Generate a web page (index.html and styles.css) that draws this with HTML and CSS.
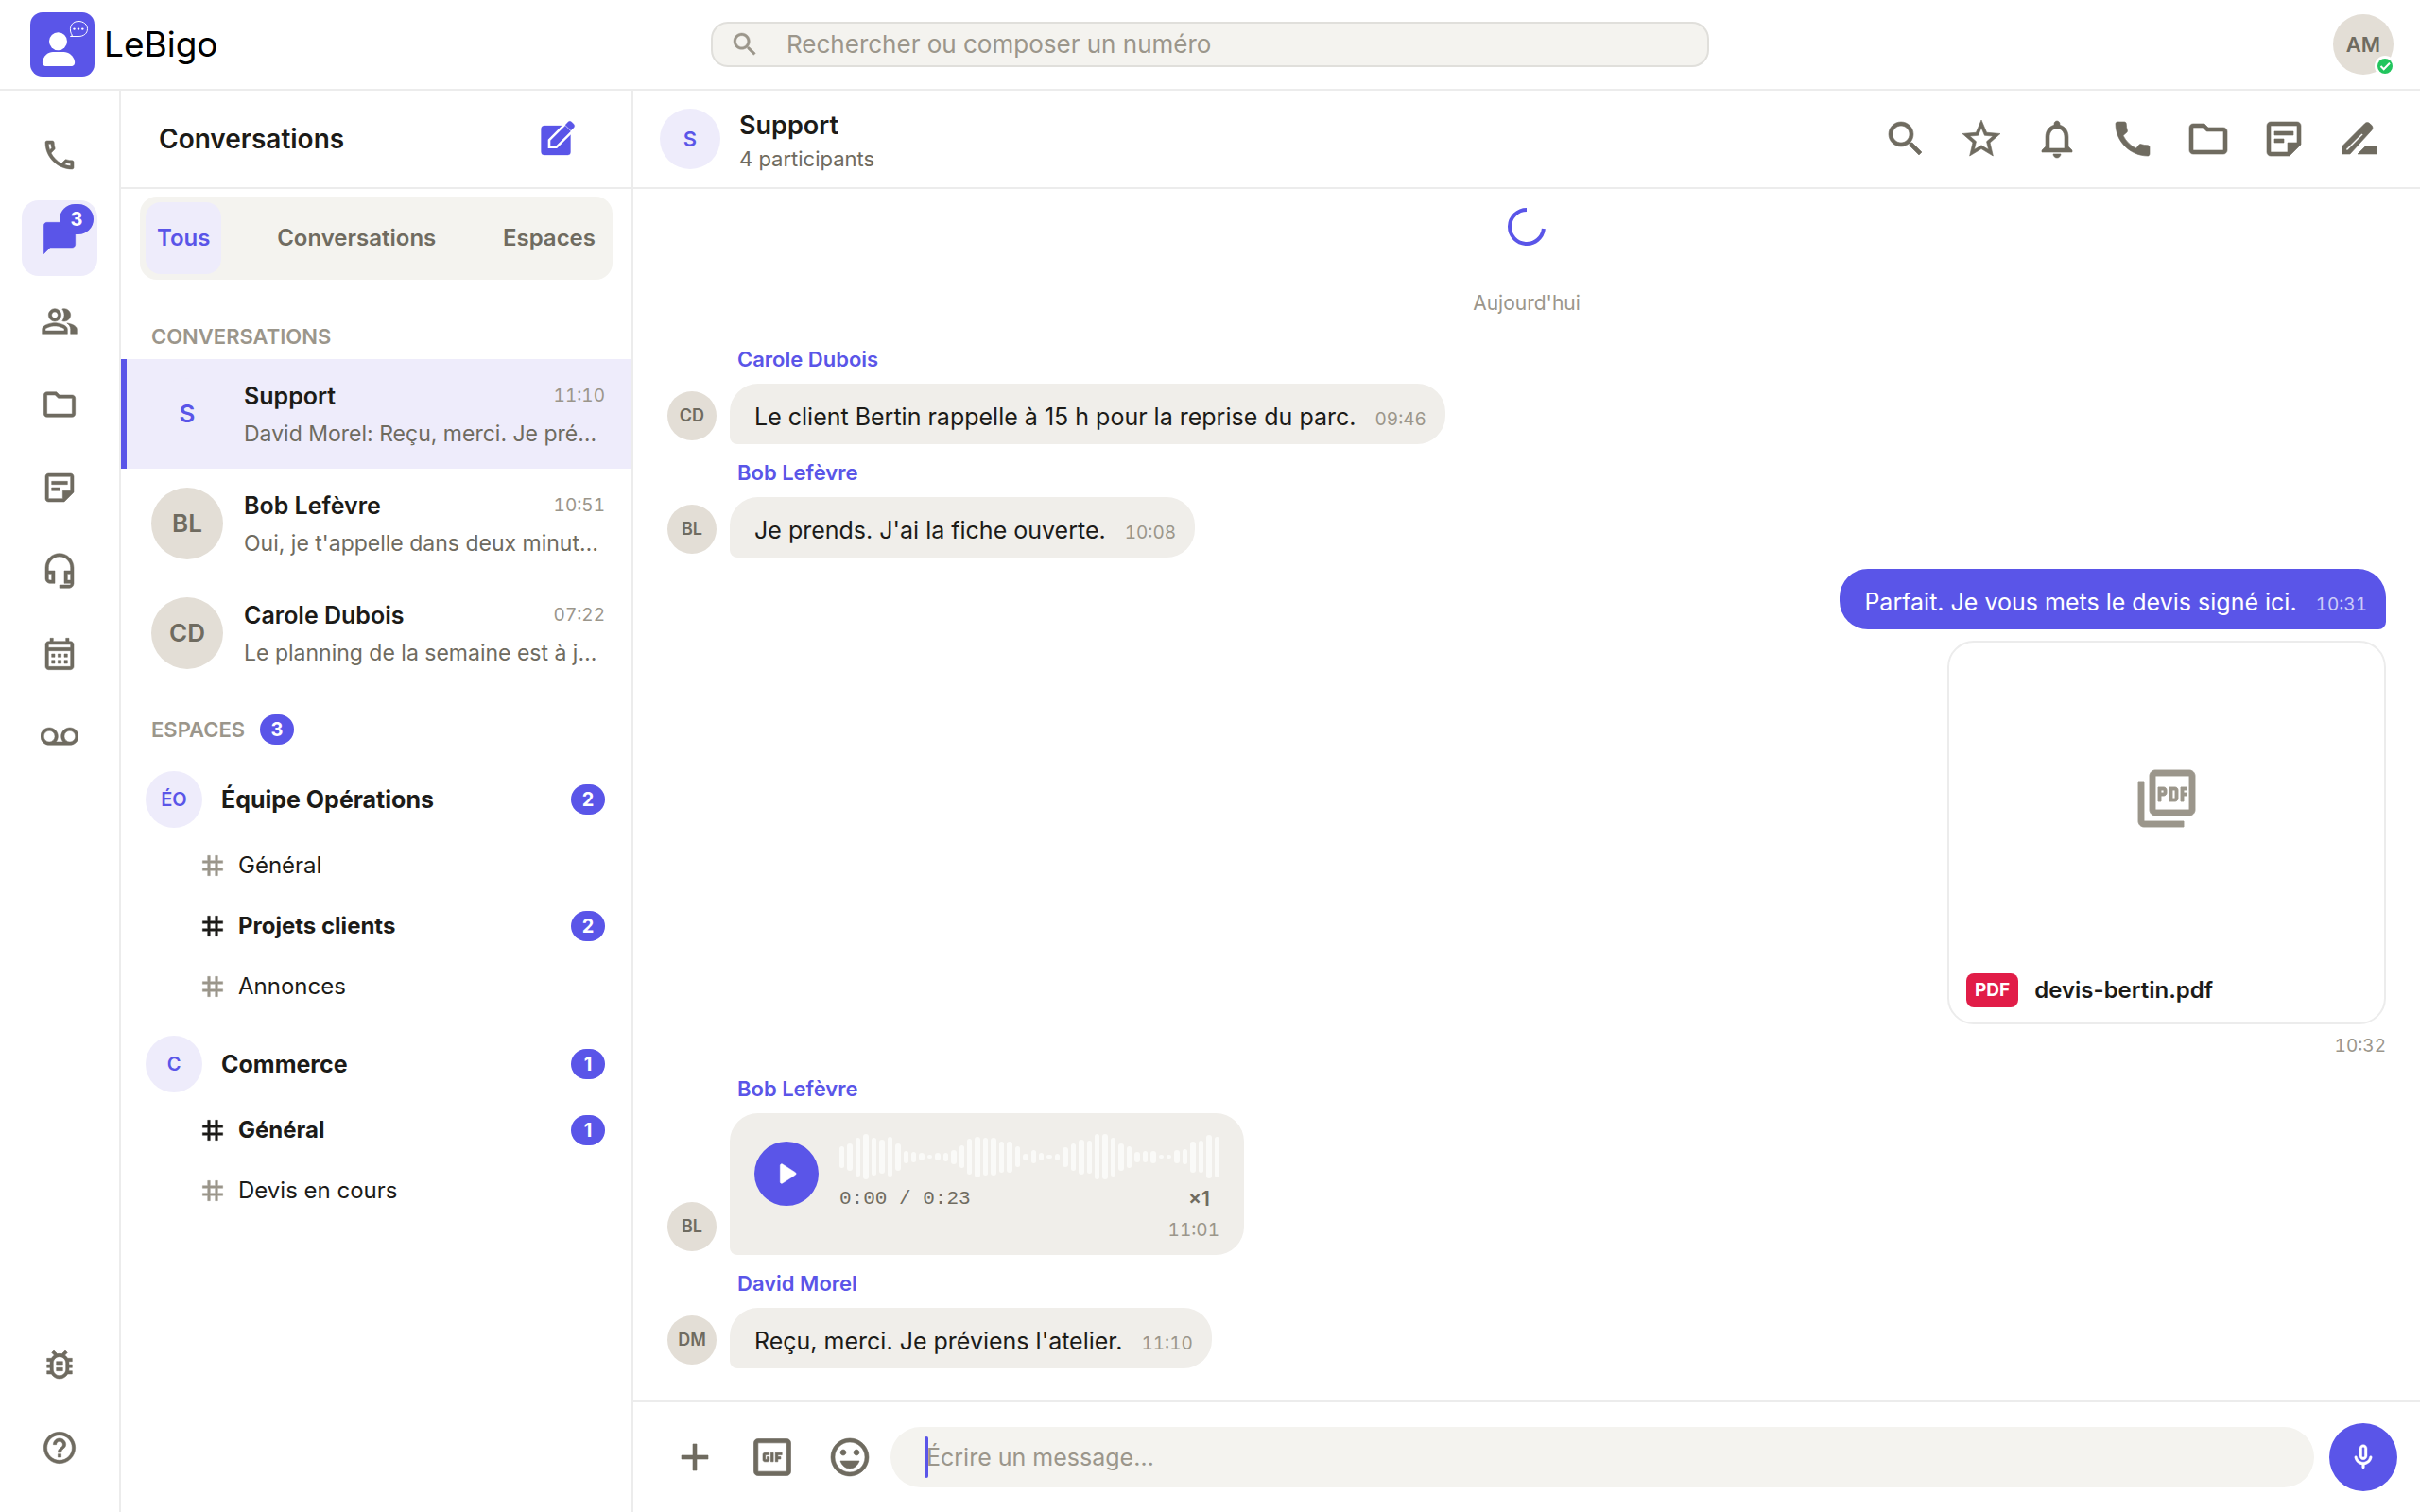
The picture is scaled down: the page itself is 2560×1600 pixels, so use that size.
FILE: index.html
```html
<!DOCTYPE html>
<html lang="fr">
<head>
<meta charset="utf-8">
<meta name="viewport" content="width=device-width, initial-scale=1">
<title>LeBigo</title>
<link rel="stylesheet" href="styles.css">
</head>
<body>
<svg class="sprite" aria-hidden="true">
  <symbol id="i-search" viewBox="0 0 24 24"><path d="M15.500 14h-.79l-.28-.27C15.410 12.590 16 11.110 16 9.500 16 5.910 13.090 3 9.500 3S3 5.910 3 9.500 5.910 16 9.500 16c1.610 0 3.090-.59 4.230-1.570l.27.28v.79l5 4.990L20.490 19l-4.990-5zm-6 0C7.010 14 5 11.990 5 9.500S7.010 5 9.500 5 14 7.010 14 9.500 11.990 14 9.500 14z"/></symbol>
  <symbol id="i-call-o" viewBox="0 0 24 24"><path d="M6.540 5c.06.89.21 1.760.45 2.590l-1.200 1.200c-.41-1.200-.67-2.470-.76-3.790h1.510m9.860 12.020c.85.24 1.720.39 2.600.45v1.490c-1.320-.09-2.590-.35-3.800-.75l1.200-1.190M7.500 3H4c-.55 0-1 .45-1 1 0 9.390 7.610 17 17 17 .55 0 1-.45 1-1v-3.490c0-.55-.45-1-1-1-1.240 0-2.450-.2-3.570-.57-.1-.04-.21-.05-.31-.05-.26 0-.51.1-.71.29l-2.200 2.200c-2.830-1.450-5.150-3.760-6.590-6.590l2.200-2.200c.28-.28.36-.67.25-1.020C8.700 6.450 8.500 5.250 8.500 4c0-.55-.45-1-1-1z"/></symbol>
  <symbol id="i-call" viewBox="0 0 24 24"><path d="M20.010 15.380c-1.230 0-2.420-.2-3.530-.56-.35-.12-.74-.03-1.010.24l-1.570 1.970c-2.830-1.350-5.480-3.900-6.890-6.830l1.950-1.660c.27-.28.35-.67.24-1.020-.37-1.110-.56-2.300-.56-3.530 0-.54-.45-.99-.99-.99H4.190C3.650 3 3 3.240 3 3.990 3 13.280 10.730 21 20.010 21c.71 0 .99-.63.99-1.180v-3.450c0-.54-.45-.99-.99-.99z"/></symbol>
  <symbol id="i-chat" viewBox="0 0 24 24"><path d="M20 2H4c-1.100 0-2 .9-2 2v18l4-4h14c1.100 0 2-.9 2-2V4c0-1.100-.9-2-2-2z"/></symbol>
  <symbol id="i-people" viewBox="0 0 24 24"><path d="M16.670 13.130C18.040 14.060 19 15.320 19 17v3h4v-3c0-2.180-3.570-3.470-6.330-3.870zM15 12c2.210 0 4-1.790 4-4s-1.790-4-4-4c-.47 0-.91.1-1.330.24C14.500 5.270 15 6.580 15 8s-.5 2.730-1.330 3.760c.42.14.86.24 1.330.24zM9 12c2.210 0 4-1.790 4-4s-1.790-4-4-4-4 1.790-4 4 1.790 4 4 4zm0-6c1.100 0 2 .9 2 2s-.9 2-2 2-2-.9-2-2 .9-2 2-2zM9 13c-2.670 0-8 1.340-8 4v3h16v-3c0-2.660-5.330-4-8-4zm6 5H3v-.99C3.200 16.290 6.300 15 9 15s5.800 1.290 6 2v1z"/></symbol>
  <symbol id="i-folder" viewBox="0 0 24 24"><path d="M9.170 6l2 2H20v10H4V6h5.170M10 4H4c-1.100 0-1.990.9-1.990 2L2 18c0 1.100.9 2 2 2h16c1.100 0 2-.9 2-2V8c0-1.100-.9-2-2-2h-8l-2-2z"/></symbol>
  <symbol id="i-note" viewBox="0 0 24 24"><path d="M19 5v9h-5v5H5V5h14m0-2H5c-1.100 0-2 .9-2 2v14c0 1.100.9 2 2 2h10l6-6V5c0-1.100-.9-2-2-2zm-7 11H7v-2h5v2zm5-4H7V8h10v2z"/></symbol>
  <symbol id="i-agent" viewBox="0 0 24 24"><path d="M19 14v4h-2v-4h2M7 14v4H6c-.55 0-1-.45-1-1v-3h2m5-13c-4.970 0-9 4.030-9 9v7c0 1.660 1.340 3 3 3h3v-8H5v-2c0-3.870 3.130-7 7-7s7 3.130 7 7v2h-4v8h4v1h-7v2h6c1.660 0 3-1.340 3-3V10c0-4.970-4.030-9-9-9z"/></symbol>
  <symbol id="i-calendar" viewBox="0 0 24 24"><path d="M19 4h-1V2h-2v2H8V2H6v2H5c-1.110 0-1.990.9-1.990 2L3 20c0 1.100.89 2 2 2h14c1.100 0 2-.9 2-2V6c0-1.100-.9-2-2-2zm0 16H5V10h14v10zm0-12H5V6h14v2zM9 14H7v-2h2v2zm4 0h-2v-2h2v2zm4 0h-2v-2h2v2zm-8 4H7v-2h2v2zm4 0h-2v-2h2v2zm4 0h-2v-2h2v2z"/></symbol>
  <symbol id="i-voicemail" viewBox="0 0 24 24"><path d="M18.500 6C15.460 6 13 8.460 13 11.500c0 1.330.47 2.550 1.260 3.500H9.740c.79-.95 1.260-2.170 1.260-3.500C11 8.460 8.540 6 5.500 6S0 8.460 0 11.500 2.460 17 5.500 17h13c3.040 0 5.500-2.460 5.500-5.500S21.540 6 18.500 6zm-13 9C3.570 15 2 13.430 2 11.500S3.570 8 5.500 8 9 9.570 9 11.500 7.430 15 5.500 15zm13 0c-1.930 0-3.500-1.570-3.500-3.500S16.570 8 18.500 8 22 9.570 22 11.500 20.430 15 18.500 15z"/></symbol>
  <symbol id="i-bug" viewBox="0 0 24 24"><path d="M20 8h-2.810c-.45-.78-1.070-1.450-1.820-1.960L17 4.410 15.590 3l-2.170 2.170C12.960 5.060 12.490 5 12 5s-.96.06-1.410.17L8.410 3 7 4.410l1.620 1.630C7.880 6.550 7.260 7.220 6.810 8H4v2h2.090c-.05.33-.09.66-.09 1v1H4v2h2v1c0 .34.04.67.09 1H4v2h2.810c1.040 1.790 2.970 3 5.190 3s4.150-1.210 5.190-3H20v-2h-2.090c.05-.33.09-.66.09-1v-1h2v-2h-2v-1c0-.34-.04-.67-.09-1H20V8zm-4 7c0 2.210-1.790 4-4 4s-4-1.790-4-4v-4c0-2.210 1.790-4 4-4s4 1.790 4 4v4zm-6-1h4v2h-4v-2zm0-4h4v2h-4v-2z"/></symbol>
  <symbol id="i-help" viewBox="0 0 24 24"><path d="M11 18h2v-2h-2v2zm1-16C6.480 2 2 6.480 2 12s4.480 10 10 10 10-4.480 10-10S17.520 2 12 2zm0 18c-4.410 0-8-3.590-8-8s3.590-8 8-8 8 3.590 8 8-3.590 8-8 8zm0-14c-2.210 0-4 1.790-4 4h2c0-1.100.9-2 2-2s2 .9 2 2c0 2-3 1.750-3 5h2c0-2.250 3-2.500 3-5 0-2.210-1.790-4-4-4z"/></symbol>
  <symbol id="i-star" viewBox="0 0 24 24"><path d="M22 9.240l-7.190-.62L12 2 9.190 8.630 2 9.240l5.460 4.730L5.820 21 12 17.270 18.180 21l-1.630-7.030L22 9.240zM12 15.400l-3.760 2.270 1-4.280-3.320-2.880 4.380-.38L12 6.100l1.710 4.040 4.380.38-3.320 2.880 1 4.280L12 15.400z"/></symbol>
  <symbol id="i-bell" viewBox="0 0 24 24"><path d="M12 22c1.100 0 2-.9 2-2h-4c0 1.100.89 2 2 2zm6-6v-5c0-3.070-1.640-5.640-4.500-6.320V4c0-.83-.67-1.500-1.500-1.500s-1.500.67-1.500 1.500v.68C7.630 5.360 6 7.920 6 11v5l-2 2v1h16v-1l-2-2zm-2 1H8v-6c0-2.480 1.510-4.500 4-4.500s4 2.020 4 4.500v6z"/></symbol>
  <symbol id="i-sign" viewBox="0 0 24 24"><path fill-rule="evenodd" d="M3 20v-4.300L14.800 3.900c.8-.8 1.900-.8 2.700 0l.9.9c.8.8.8 1.900 0 2.700L7 20zM5 17.300l8.200-8.200.7.700L5.700 18H5z"/><path d="M11 20l4-4h6v4z"/></symbol>
  <symbol id="i-tag" viewBox="0 0 24 24"><path d="M20 10V8h-4V4h-2v4h-4V4H8v4H4v2h4v4H4v2h4v4h2v-4h4v4h2v-4h4v-2h-4v-4h4zm-6 4h-4v-4h4v4z"/></symbol>
  <symbol id="i-compose" viewBox="0 0 40 40"><path d="M6 6h24.500a3 3 0 0 1 3 3v25a3 3 0 0 1-3 3H6a3.500 3.500 0 0 1-3.500-3.500v-24A3.500 3.500 0 0 1 6 6z"/><path d="M11 28.800v-7.600L28 4.200l7.600 7.600-17 17z" stroke="#fff" stroke-width="2.600"/><path d="M28 5.300l2.800-3.100c1.200-1.200 2.800-1.200 4 0l2 2c1.200 1.200 1.200 2.800 0 4L34 11z"/></symbol>
  <symbol id="i-pdf" viewBox="0 0 24 24"><path d="M20 2H8c-1.100 0-2 .9-2 2v12c0 1.100.9 2 2 2h12c1.100 0 2-.9 2-2V4c0-1.100-.9-2-2-2zm0 14H8V4h12v12zM4 6H2v14c0 1.100.9 2 2 2h14v-2H4V6zm12 6V9c0-.55-.45-1-1-1h-2v5h2c.55 0 1-.45 1-1zm-2-3h1v3h-1V9zm4 2h1v-1h-1V9h1V8h-2v5h1zm-8 0h1c.55 0 1-.45 1-1V9c0-.55-.45-1-1-1H9v5h1v-2zm0-2h1v1h-1V9z"/></symbol>
  <symbol id="i-add" viewBox="0 0 24 24"><path d="M19 13h-6v6h-2v-6H5v-2h6V5h2v6h6v2z"/></symbol>
  <symbol id="i-gif" viewBox="0 0 24 24"><path d="M19 3H5c-1.100 0-2 .9-2 2v14c0 1.100.9 2 2 2h14c1.100 0 2-.9 2-2V5c0-1.100-.9-2-2-2zm0 16H5V5h14v14zM11.300 9.800h1.200v4.400h-1.200zM13.500 9.800h3.200v1.100h-2v.9h1.400v1.100h-1.400v1.300h-1.200zM8.300 9.800h2.200v1.100H8.600v2.200h.8v-1.300h1.100v1.600c0 .5-.3.800-.8.800H8.300c-.5 0-.9-.4-.9-.9v-2.600c0-.5.4-.9.900-.9z"/></symbol>
  <symbol id="i-smile" viewBox="0 0 24 24"><path d="M11.990 2C6.470 2 2 6.480 2 12s4.470 10 9.990 10C17.520 22 22 17.520 22 12S17.520 2 11.990 2zM12 20c-4.420 0-8-3.580-8-8s3.580-8 8-8 8 3.580 8 8-3.580 8-8 8zm3.500-9c.83 0 1.500-.67 1.500-1.500S16.330 8 15.500 8 14 8.670 14 9.500s.67 1.500 1.500 1.500zm-7 0c.83 0 1.500-.67 1.500-1.500S9.330 8 8.500 8 7 8.670 7 9.500 7.670 11 8.500 11zM12 18c2.280 0 4.220-1.660 5-4H7c.78 2.340 2.720 4 5 4z"/></symbol>
  <symbol id="i-mic" viewBox="0 0 24 24"><path d="M12 14c1.660 0 3-1.340 3-3V5c0-1.660-1.340-3-3-3S9 3.340 9 5v6c0 1.660 1.340 3 3 3zm-1-9c0-.55.45-1 1-1s1 .45 1 1v6c0 .55-.45 1-1 1s-1-.45-1-1V5zm6.910 6c-.49 0-.9.36-.98.85C16.520 14.200 14.470 16 12 16s-4.520-1.800-4.930-4.150c-.08-.49-.49-.85-.98-.85-.61 0-1.090.54-1 1.140.49 3 2.890 5.350 5.910 5.780V20c0 .55.45 1 1 1s1-.45 1-1v-2.080c3.020-.43 5.420-2.780 5.910-5.780.1-.6-.39-1.140-1-1.140z"/></symbol>
  <symbol id="i-play" viewBox="0 0 24 24"><path d="M8 6.800v10.400c0 .8.900 1.300 1.500.8l8.100-5.200c.6-.4.6-1.200 0-1.600L9.500 6c-.6-.5-1.500 0-1.500.8z"/></symbol>
</svg>

<header class="topbar">
  <a class="brand" href="#">
    <svg class="brand-logo" viewBox="0 0 68 68" aria-hidden="true">
      <rect width="68" height="68" rx="13" fill="#5a55e8"/>
      <circle cx="29.500" cy="30.700" r="9.500" fill="#fff"/>
      <path d="M17 57c-3 0-4.500-2-4-5 1-6 6-10 11-10h11.500c5 0 10.500 4 11.500 10 .5 3-1 5-4 5z" fill="#fff"/>
      <path d="M44.500 24.500c-4-5-2.500-15 6.500-15 5.500 0 9.500 3.500 9.500 8 0 5-4 8-9.500 8h-8.500z" fill="none" stroke="#fff" stroke-width="1"/>
      <circle cx="46.500" cy="17.600" r="1.200" fill="#fff"/><circle cx="51" cy="17.600" r="1.200" fill="#fff"/><circle cx="55.300" cy="17.600" r="1.200" fill="#fff"/>
    </svg>
    <span class="brand-name">LeBigo</span>
  </a>
  <label class="search">
    <svg class="icon icon-32"><use href="#i-search"/></svg>
    <input type="search" placeholder="Rechercher ou composer un numéro" aria-label="Rechercher ou composer un numéro">
  </label>
  <button class="account" aria-label="Mon compte">
    <span class="avatar avatar-64">AM</span>
    <svg class="status" viewBox="0 0 22 22" aria-hidden="true"><circle cx="11" cy="11" r="11" fill="#fff"/><circle cx="11" cy="11" r="8" fill="#22c55e"/><path d="M6.500 11l3.200 3.200 6.300-6.500" fill="none" stroke="#fff" stroke-width="2"/></svg>
  </button>
</header>

<div class="app">
  <nav class="rail" aria-label="Navigation">
    <a class="rail-item" href="#" aria-label="Appels"><svg class="icon icon-40"><use href="#i-call-o"/></svg></a>
    <a class="rail-item is-active" href="#" aria-label="Messages"><svg class="icon icon-40"><use href="#i-chat"/></svg><span class="badge rail-badge">3</span></a>
    <a class="rail-item" href="#" aria-label="Contacts"><svg class="icon icon-40"><use href="#i-people"/></svg></a>
    <a class="rail-item" href="#" aria-label="Fichiers"><svg class="icon icon-40"><use href="#i-folder"/></svg></a>
    <a class="rail-item" href="#" aria-label="Notes"><svg class="icon icon-40"><use href="#i-note"/></svg></a>
    <a class="rail-item" href="#" aria-label="Assistance"><svg class="icon icon-40"><use href="#i-agent"/></svg></a>
    <a class="rail-item" href="#" aria-label="Agenda"><svg class="icon icon-40"><use href="#i-calendar"/></svg></a>
    <a class="rail-item" href="#" aria-label="Messagerie vocale"><svg class="icon icon-40"><use href="#i-voicemail"/></svg></a>
    <a class="rail-item rail-push" href="#" aria-label="Signaler un bug"><svg class="icon icon-40"><use href="#i-bug"/></svg></a>
    <a class="rail-item" href="#" aria-label="Aide"><svg class="icon icon-40"><use href="#i-help"/></svg></a>
  </nav>

  <aside class="sidebar">
    <div class="sidebar-head">
      <h1>Conversations</h1>
      <button class="compose" aria-label="Nouvelle conversation"><svg class="icon icon-40"><use href="#i-compose"/></svg></button>
    </div>
    <div class="tabs">
      <button class="tab is-active">Tous</button>
      <button class="tab">Conversations</button>
      <button class="tab">Espaces</button>
    </div>
    <h2 class="section section-first">CONVERSATIONS</h2>
    <a class="conv is-active" href="#">
      <span class="avatar avatar-76 lilac">S</span>
      <span class="conv-body">
        <span class="conv-top"><span class="conv-name">Support</span><time>11:10</time></span>
        <span class="conv-preview">David Morel: Reçu, merci. Je pré…</span>
      </span>
    </a>
    <a class="conv" href="#">
      <span class="avatar avatar-76">BL</span>
      <span class="conv-body">
        <span class="conv-top"><span class="conv-name">Bob Lefèvre</span><time>10:51</time></span>
        <span class="conv-preview">Oui, je t'appelle dans deux minut…</span>
      </span>
    </a>
    <a class="conv" href="#">
      <span class="avatar avatar-76">CD</span>
      <span class="conv-body">
        <span class="conv-top"><span class="conv-name">Carole Dubois</span><time>07:22</time></span>
        <span class="conv-preview">Le planning de la semaine est à j…</span>
      </span>
    </a>
    <h2 class="section section-spaces">ESPACES <span class="badge">3</span></h2>
    <div class="space">
      <a class="space-head" href="#"><span class="avatar avatar-60 lilac">ÉO</span><span class="grow">Équipe Opérations</span><span class="badge">2</span></a>
      <a class="channel" href="#"><svg class="icon icon-32"><use href="#i-tag"/></svg><span class="grow">Général</span></a>
      <a class="channel is-unread" href="#"><svg class="icon icon-32"><use href="#i-tag"/></svg><span class="grow">Projets clients</span><span class="badge">2</span></a>
      <a class="channel" href="#"><svg class="icon icon-32"><use href="#i-tag"/></svg><span class="grow">Annonces</span></a>
    </div>
    <div class="space">
      <a class="space-head" href="#"><span class="avatar avatar-60 lilac">C</span><span class="grow">Commerce</span><span class="badge">1</span></a>
      <a class="channel is-unread" href="#"><svg class="icon icon-32"><use href="#i-tag"/></svg><span class="grow">Général</span><span class="badge">1</span></a>
      <a class="channel" href="#"><svg class="icon icon-32"><use href="#i-tag"/></svg><span class="grow">Devis en cours</span></a>
    </div>
  </aside>

  <main class="chat">
    <div class="chat-head">
      <span class="avatar avatar-64 lilac">S</span>
      <div class="grow">
        <h2 class="chat-title">Support</h2>
        <p class="chat-sub">4 participants</p>
      </div>
      <div class="tools">
        <button aria-label="Rechercher"><svg class="icon icon-48"><use href="#i-search"/></svg></button>
        <button aria-label="Favori"><svg class="icon icon-48"><use href="#i-star"/></svg></button>
        <button aria-label="Notifications"><svg class="icon icon-48"><use href="#i-bell"/></svg></button>
        <button aria-label="Appeler"><svg class="icon icon-48"><use href="#i-call"/></svg></button>
        <button aria-label="Fichiers"><svg class="icon icon-48"><use href="#i-folder"/></svg></button>
        <button aria-label="Notes"><svg class="icon icon-48"><use href="#i-note"/></svg></button>
        <button aria-label="Signer"><svg class="icon icon-48"><use href="#i-sign"/></svg></button>
      </div>
    </div>

    <div class="messages">
      <svg class="spinner" viewBox="0 0 40 40" aria-hidden="true"><path d="M20 2A18 18 0 1 0 37.900 22" fill="none" stroke="#5a55e8" stroke-width="4"/></svg>
      <p class="day">Aujourd'hui</p>

      <p class="author">Carole Dubois</p>
      <div class="row"><span class="avatar avatar-52">CD</span><div class="bubble"><span>Le client Bertin rappelle à 15 h pour la reprise du parc.</span><time>09:46</time></div></div>

      <p class="author">Bob Lefèvre</p>
      <div class="row"><span class="avatar avatar-52">BL</span><div class="bubble"><span>Je prends. J'ai la fiche ouverte.</span><time>10:08</time></div></div>

      <div class="row row-own"><div class="bubble own"><span>Parfait. Je vous mets le devis signé ici.</span><time>10:31</time></div></div>

      <div class="row row-own">
        <a class="file" href="#">
          <span class="file-preview"><svg class="icon icon-72"><use href="#i-pdf"/></svg></span>
          <span class="file-foot"><span class="file-type">PDF</span><span>devis-bertin.pdf</span></span>
        </a>
      </div>
      <time class="file-time">10:32</time>

      <p class="author">Bob Lefèvre</p>
      <div class="row">
        <span class="avatar avatar-52">BL</span>
        <div class="bubble voice">
          <button class="play" aria-label="Lire le message vocal"><svg class="icon icon-40"><use href="#i-play"/></svg></button>
          <div class="voice-body">
            <div class="wave"><i style="height:23px"></i><i style="height:29px"></i><i style="height:41px"></i><i style="height:48px"></i><i style="height:40px"></i><i style="height:36px"></i><i style="height:42px"></i><i style="height:29px"></i><i style="height:13px"></i><i style="height:11px"></i><i style="height:8px"></i><i style="height:4px"></i><i style="height:8px"></i><i style="height:9px"></i><i style="height:15px"></i><i style="height:24px"></i><i style="height:38px"></i><i style="height:43px"></i><i style="height:40px"></i><i style="height:40px"></i><i style="height:33px"></i><i style="height:33px"></i><i style="height:22px"></i><i style="height:7px"></i><i style="height:14px"></i><i style="height:8px"></i><i style="height:4px"></i><i style="height:7px"></i><i style="height:21px"></i><i style="height:29px"></i><i style="height:37px"></i><i style="height:35px"></i><i style="height:48px"></i><i style="height:48px"></i><i style="height:41px"></i><i style="height:29px"></i><i style="height:23px"></i><i style="height:11px"></i><i style="height:12px"></i><i style="height:13px"></i><i style="height:4px"></i><i style="height:4px"></i><i style="height:14px"></i><i style="height:16px"></i><i style="height:33px"></i><i style="height:34px"></i><i style="height:46px"></i><i style="height:43px"></i></div>
            <div class="voice-meta"><span class="clock">0:00 / 0:23</span><button class="speed">×1</button></div>
            <time>11:01</time>
          </div>
        </div>
      </div>

      <p class="author">David Morel</p>
      <div class="row"><span class="avatar avatar-52">DM</span><div class="bubble"><span>Reçu, merci. Je préviens l'atelier.</span><time>11:10</time></div></div>
    </div>

    <form class="composer">
      <div class="composer-tools">
        <button type="button" aria-label="Ajouter"><svg class="icon icon-48"><use href="#i-add"/></svg></button>
        <button type="button" aria-label="GIF"><svg class="icon icon-52"><use href="#i-gif"/></svg></button>
        <button type="button" aria-label="Émojis"><svg class="icon icon-48"><use href="#i-smile"/></svg></button>
      </div>
      <label class="field"><span class="caret"></span><input type="text" placeholder="Écrire un message…" aria-label="Écrire un message"></label>
      <button type="button" class="mic" aria-label="Message vocal"><svg class="icon icon-32"><use href="#i-mic"/></svg></button>
    </form>
  </main>
</div>
</body>
</html>
```
FILE: styles.css
```css
:root {
  --indigo: #5a55e8;
  --lilac: #eeecfb;
  --ink: #1c1b18;
  --muted: #6f6b60;
  --faint: #9b968b;
  --line: #ececec;
  --sand: #e3ded6;
  --field: #f4f3ef;
  --bubble: #f0eeea;
}

* { box-sizing: border-box; }

body {
  margin: 0;
  height: 100vh;
  display: flex;
  flex-direction: column;
  background: #fff;
  color: var(--ink);
  font-family: Inter, "Liberation Sans", sans-serif;
  font-size: 24px;
  line-height: 32px;
}

h1, h2, p { margin: 0; font-weight: 400; }
a { color: inherit; text-decoration: none; }
button { border: 0; padding: 0; background: none; color: inherit; font: inherit; cursor: pointer; }
input { border: 0; outline: 0; padding: 0; background: none; color: inherit; font: inherit; min-width: 0; }
input::placeholder { color: var(--faint); opacity: 1; }
time { color: var(--faint); font-size: 19px; font-variant-numeric: tabular-nums; }

.sprite { display: none; }
.icon { display: block; flex: none; fill: currentColor; stroke: currentColor; stroke-width: 0.3; }
.icon-32 { width: 32px; height: 32px; }
.icon-40 { width: 40px; height: 40px; }
.icon-48 { width: 48px; height: 48px; }
.icon-52 { width: 52px; height: 52px; }
.icon-72 { width: 72px; height: 72px; }
.grow { flex: 1; min-width: 0; }

.avatar {
  flex: none;
  display: flex;
  align-items: center;
  justify-content: center;
  border-radius: 50%;
  background: var(--sand);
  color: var(--muted);
  font-weight: 600;
}
.avatar-52 { width: 52px; height: 52px; font-size: 18px; }
.avatar-60 { width: 60px; height: 60px; font-size: 20px; }
.avatar-64 { width: 64px; height: 64px; font-size: 22px; }
.avatar-76 { width: 76px; height: 76px; font-size: 26px; }
.avatar.lilac { background: var(--lilac); color: var(--indigo); }

.badge {
  flex: none;
  min-width: 36px;
  height: 32px;
  border-radius: 16px;
  background: var(--indigo);
  color: #fff;
  font-size: 20px;
  font-weight: 700;
  line-height: 32px;
  text-align: center;
}

/* Top bar */
.topbar {
  flex: none;
  height: 96px;
  padding: 0 28px;
  display: grid;
  grid-template-columns: 1fr minmax(0, 1056px) 1fr;
  align-items: center;
  border-bottom: 2px solid var(--line);
}
.brand { padding-left: 4px; display: flex; align-items: center; gap: 10px; color: #000; }
.brand-logo { width: 68px; height: 68px; }
.brand-name { font-size: 37px; line-height: 48px; }
.search {
  height: 48px;
  padding: 0 18px;
  display: flex;
  align-items: center;
  gap: 28px;
  border: 2px solid #e0dfdb;
  border-radius: 18px;
  background: var(--field);
  color: var(--faint);
}
.search input { flex: 1; font-size: 26px; }
.account { justify-self: end; position: relative; }
.status { position: absolute; right: -2px; bottom: -2px; width: 22px; height: 22px; }

.app { flex: 1; min-height: 0; display: flex; }

/* Icon rail */
.rail {
  flex: none;
  width: 128px;
  padding: 28px 0;
  display: flex;
  flex-direction: column;
  align-items: center;
  gap: 8px;
  border-right: 2px solid var(--line);
  color: var(--muted);
}
.rail-item {
  position: relative;
  width: 80px;
  height: 80px;
  display: flex;
  align-items: center;
  justify-content: center;
  border-radius: 18px;
}
.rail-item.is-active { background: var(--lilac); color: var(--indigo); }
.rail-badge { position: absolute; top: 4px; right: 4px; }
.rail-push { margin-top: auto; }

/* Conversation list */
.sidebar {
  flex: none;
  width: 542px;
  overflow: hidden;
  border-right: 2px solid var(--line);
}
.sidebar-head {
  height: 104px;
  padding: 0 58px 0 40px;
  display: flex;
  align-items: center;
  justify-content: space-between;
  border-bottom: 2px solid var(--line);
}
.sidebar-head h1 { font-size: 28px; font-weight: 600; }
.compose { color: var(--indigo); }
.tabs {
  margin: 8px 20px 0;
  padding: 6px;
  display: flex;
  justify-content: space-between;
  border-radius: 18px;
  background: var(--field);
}
.tab {
  height: 76px;
  padding: 0 12px;
  border-radius: 16px;
  color: var(--muted);
  font-size: 24px;
  font-weight: 600;
}
.tab.is-active { background: var(--lilac); color: var(--indigo); }
.section {
  padding: 0 32px;
  display: flex;
  align-items: center;
  gap: 16px;
  color: var(--faint);
  font-size: 22px;
  font-weight: 600;
}
.section-first { margin-top: 44px; margin-bottom: 8px; }
.section-spaces { margin-top: 28px; margin-bottom: 20px; }

.conv {
  height: 116px;
  padding: 0 28px 0 26px;
  display: flex;
  align-items: center;
  gap: 22px;
  border-left: 6px solid transparent;
}
.conv.is-active { border-left-color: var(--indigo); background: var(--lilac); }
.conv-body { flex: 1; min-width: 0; padding-top: 2px; display: flex; flex-direction: column; gap: 8px; }
.conv-top { display: flex; justify-content: space-between; }
.conv-name { font-size: 25px; font-weight: 600; }
.conv-preview {
  overflow: hidden;
  color: var(--muted);
  font-size: 23px;
  text-overflow: ellipsis;
  white-space: nowrap;
}

.space + .space { margin-top: 12px; }
.space-head {
  height: 76px;
  padding: 0 28px 0 26px;
  display: flex;
  align-items: center;
  gap: 20px;
  font-size: 25px;
  font-weight: 700;
}
.space-head .avatar { font-weight: 600; }
.channel {
  height: 64px;
  padding: 0 28px 0 81px;
  display: flex;
  align-items: center;
  gap: 11px;
}
.channel .icon { color: var(--faint); }
.channel.is-unread { font-weight: 700; }
.channel.is-unread .icon { color: var(--ink); }

/* Chat */
.chat { flex: 1; min-width: 0; display: flex; flex-direction: column; }
.chat-head {
  flex: none;
  height: 104px;
  padding: 0 24px 0 28px;
  display: flex;
  align-items: center;
  gap: 20px;
  border-bottom: 2px solid var(--line);
}
.chat-title { padding-top: 5px; font-size: 27px; font-weight: 600; line-height: 36px; }
.chat-sub { color: var(--muted); font-size: 22px; line-height: 34px; }
.tools { display: flex; color: var(--muted); }
.tools button { width: 80px; height: 80px; display: grid; place-items: center; }

.messages {
  flex: 1;
  min-height: 0;
  overflow: hidden;
  padding: 20px 36px 24px;
  display: flex;
  flex-direction: column;
}
.spinner { flex: none; align-self: center; width: 40px; height: 40px; }
.day { margin: 45px 0 13px; color: var(--faint); font-size: 21px; text-align: center; }
.author {
  margin: 12px 0 8px 74px;
  color: var(--indigo);
  font-size: 22px;
  font-weight: 600;
  line-height: 36px;
}
.row { display: flex; align-items: flex-end; gap: 14px; }
.row .avatar { margin-bottom: 4px; }
.row-own { margin-top: 12px; justify-content: flex-end; }
.bubble {
  min-height: 64px;
  padding: 19px 20px 13px 26px;
  display: flex;
  align-items: baseline;
  gap: 20px;
  border-radius: 30px 30px 30px 8px;
  background: var(--bubble);
  font-size: 25px;
}
.bubble time { line-height: 24px; }
.own { border-radius: 30px 30px 8px 30px; background: var(--indigo); color: #fff; }
.own time { color: #cdccf8; }

.file {
  width: 464px;
  border: 2px solid var(--line);
  border-radius: 28px;
}
.file-preview { height: 330px; display: grid; place-items: center; color: var(--faint); }
.file-foot { padding: 20px 18px 16px; display: flex; align-items: center; gap: 17px; font-weight: 600; }
.file-type {
  padding: 0 9px;
  border-radius: 8px;
  background: #e11d48;
  color: #fff;
  font-size: 19px;
  font-weight: 700;
  line-height: 36px;
}
.file-time { margin-top: 8px; line-height: 30px; text-align: right; }

.voice { width: 544px; height: 150px; padding: 22px 26px 14px; align-items: flex-start; gap: 22px; }
.play {
  flex: none;
  width: 68px;
  height: 68px;
  margin-top: 8px;
  display: grid;
  place-items: center;
  border-radius: 50%;
  background: var(--indigo);
  color: #fff;
}
.voice-body { flex: 1; min-width: 0; display: flex; flex-direction: column; gap: 5px; }
.voice-body time { text-align: right; }
.wave { height: 48px; display: flex; align-items: center; gap: 3px; }
.wave i { flex: 1; border-radius: 3px; background: #fafaf8; }
.voice-meta { display: flex; justify-content: space-between; padding-right: 10px; color: var(--muted); }
.clock { font-family: "Liberation Mono", monospace; font-size: 21px; }
.speed { font-size: 21px; font-weight: 600; }

/* Composer */
.composer {
  flex: none;
  height: 118px;
  padding: 0 24px;
  display: flex;
  align-items: center;
  border-top: 2px solid var(--line);
}
.composer-tools { display: flex; color: var(--muted); }
.composer-tools button { width: 82px; height: 64px; display: grid; place-items: center; }
.field {
  position: relative;
  flex: 1;
  min-width: 0;
  height: 64px;
  margin: 0 16px 0 2px;
  padding: 0 38px;
  display: flex;
  align-items: center;
  border-radius: 32px;
  background: var(--field);
}
.field input { flex: 1; font-size: 25px; }
.caret {
  position: absolute;
  left: 36px;
  top: 10px;
  width: 4px;
  height: 44px;
  border-radius: 2px;
  background: var(--indigo);
}
.mic {
  flex: none;
  width: 72px;
  height: 72px;
  display: grid;
  place-items: center;
  border-radius: 50%;
  background: var(--indigo);
  color: #fff;
}
```
